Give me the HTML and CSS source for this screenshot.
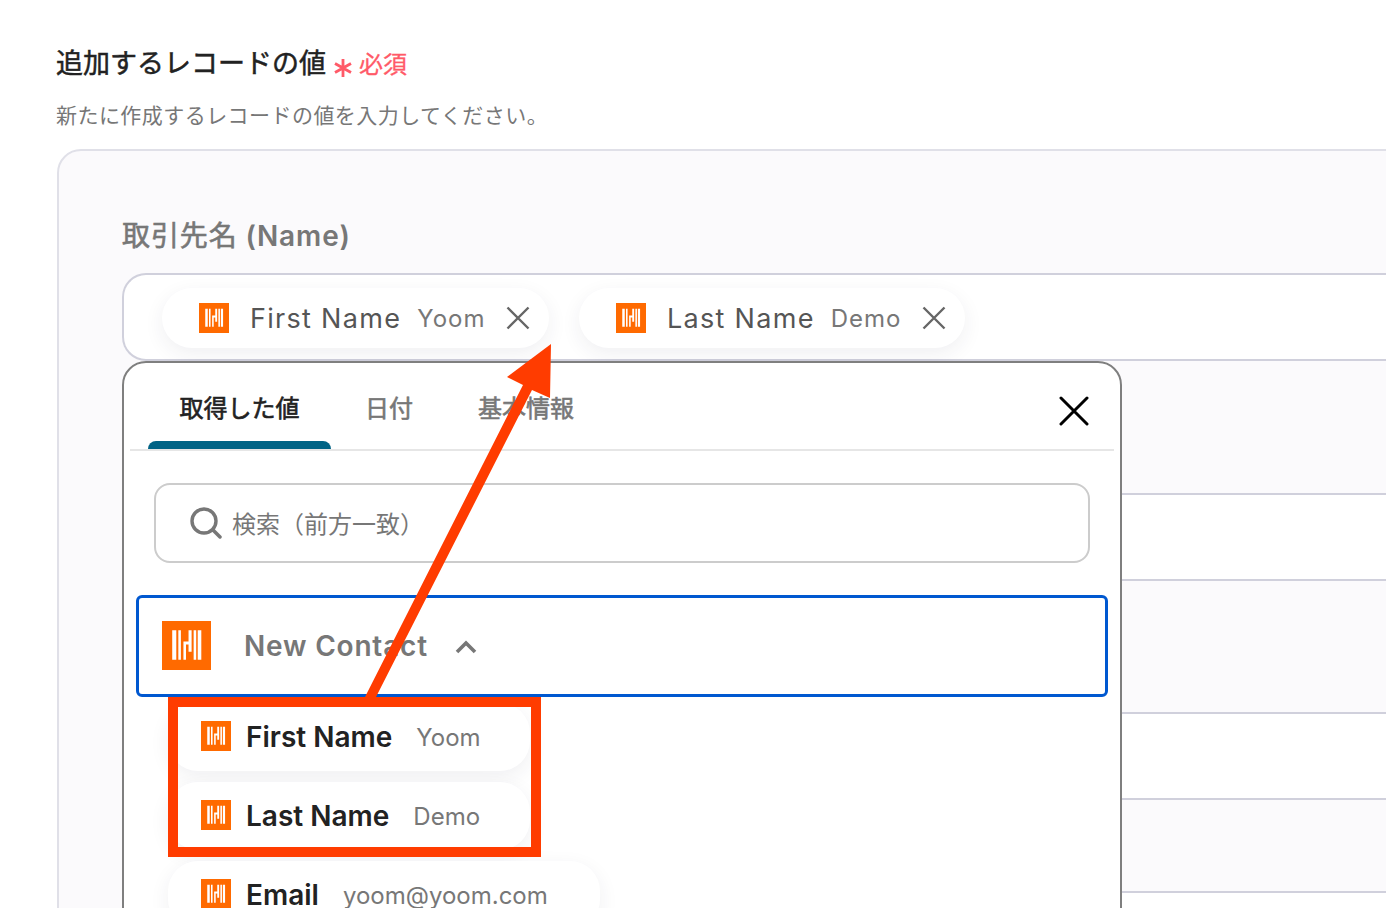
FILE: index.html
```html
<!DOCTYPE html>
<html lang="ja">
<head>
<meta charset="utf-8">
<title>追加するレコードの値</title>
<link rel="stylesheet" href="styles.css">
</head>
<body>
<svg class="defs" width="0" height="0" aria-hidden="true">
  <symbol id="logo" viewBox="0 0 48 48">
    <rect width="48" height="48" fill="#ff6a00"/>
    <path fill="#fff" d="M10 9h4v29h-4zM16 9h2.500v29H16zM21 20h5V9h3v21h-3v-7h-2.500v15H21zM31 9h2.500v29H31zM35 9h3.500v29H35z"/>
  </symbol>
</svg>
<main class="page">
  <h1 class="title">追加するレコードの値<span class="req"><svg class="star" viewBox="0 0 20 20"><path d="M10 1v18M2 5.500l16 9M18 5.500l-16 9" stroke="#ff5a68" stroke-width="2.800" fill="none"/></svg>必須</span></h1>
  <p class="sub">新たに作成するレコードの値を入力してください。</p>
  <section class="panel">
    <h2 class="label"><span class="label-ja">取引先名</span> (Name)</h2>
    <div class="field">
      <span class="chip">
        <svg class="ico"><use href="#logo"/></svg>
        <span class="chip-name">First Name</span>
        <span class="chip-val">Yoom</span>
        <svg class="chip-x" viewBox="0 0 24 24"><path d="M1.500 1.500l21 21M22.500 1.500l-21 21" stroke="#666" stroke-width="2.400" fill="none"/></svg>
      </span>
      <span class="chip">
        <svg class="ico"><use href="#logo"/></svg>
        <span class="chip-name">Last Name</span>
        <span class="chip-val">Demo</span>
        <svg class="chip-x" viewBox="0 0 24 24"><path d="M1.500 1.500l21 21M22.500 1.500l-21 21" stroke="#666" stroke-width="2.400" fill="none"/></svg>
      </span>
    </div>
    <div class="field gap-a"></div>
    <div class="field gap-b"></div>
    <div class="field gap-c"></div>
  </section>

  <div class="popup">
    <div class="tabs">
      <span class="tab active">取得した値</span>
      <span class="tab t2">日付</span>
      <span class="tab t3">基本情報</span>
      <svg class="close" viewBox="0 0 30 30"><path d="M2 2l26 26M28 2L2 28" stroke="#000" stroke-width="3" stroke-linecap="round" fill="none"/></svg>
    </div>
    <div class="search">
      <svg class="glass" viewBox="0 0 32 32"><circle cx="14" cy="14" r="12" stroke="#777" stroke-width="3.400" fill="none"/><path d="M23 23l7 7" stroke="#777" stroke-width="3.500" stroke-linecap="round"/></svg>
      <span class="search-text">検索（前方一致）</span>
    </div>
    <div class="group">
      <svg class="group-ico"><use href="#logo"/></svg>
      <span class="group-name">New Contact</span>
      <svg class="chev" viewBox="0 0 22 14"><path d="M2 12l9-9 9 9" stroke="#777" stroke-width="3.600" fill="none"/></svg>
    </div>
    <ul class="items">
      <li class="item w1"><svg class="ico"><use href="#logo"/></svg><b>First Name</b><span>Yoom</span></li>
      <li class="item w1"><svg class="ico"><use href="#logo"/></svg><b>Last Name</b><span>Demo</span></li>
      <li class="item w2"><svg class="ico"><use href="#logo"/></svg><b>Email</b><span>yoom@yoom.com</span></li>
    </ul>
  </div>

  <div class="mark"></div>
  <svg class="arrow" viewBox="0 0 1386 908" aria-hidden="true">
    <path fill="#ff3c00" d="M365 697L523 385L507 377L551 344L550 398L532 390L376 697z"/>
  </svg>
</main>
</body>
</html>
```
FILE: styles.css
```css
* { box-sizing: border-box; }
html, body {
  margin: 0;
  height: 908px;
  overflow: hidden;
  background: #fff;
}
body {
  font-family: Inter, "Noto Sans CJK JP", sans-serif;
  color: #222;
}
.defs { position: absolute; }
.page {
  position: relative;
  height: 908px;
  overflow: hidden;
  padding: 45px 0 0 56px;
}
.title {
  margin: 0;
  display: flex;
  align-items: center;
  height: 38px;
  font-size: 27px;
  font-weight: 400;
  line-height: 38px;
  color: #222;
  -webkit-text-stroke: 0.5px #222;
}
.req {
  display: flex;
  align-items: center;
  margin-left: 7px;
  padding-top: 2px;
  font-size: 24px;
  font-weight: 400;
  color: #ff5a68;
  -webkit-text-stroke: 0.3px #ff5a68;
}
.star {
  width: 20px;
  height: 20px;
  margin: 6px 6px 0 0;
}
.sub {
  margin: 17px 0 0;
  font-size: 21px;
  line-height: 32px;
  letter-spacing: 0.45px;
  color: #777;
}
.panel {
  width: 1400px;
  height: 800px;
  margin: 17px 0 0 1px;
  padding: 66px 0 0 63px;
  background: #fbfafc;
  border: 2px solid #e0e0e8;
  border-radius: 24px 0 0 0;
}
.label {
  margin: 0 0 18px;
  font-size: 28px;
  font-weight: 600;
  line-height: 38px;
  letter-spacing: 0.9px;
  color: #777;
}
.label-ja {
  font-weight: 400;
  -webkit-text-stroke: 0.6px #777;
}
.field {
  display: flex;
  align-items: center;
  gap: 30px;
  height: 88px;
  padding: 2px 0 0 38px;
  background: #fff;
  border: 2px solid #d0d0dc;
  border-right: 0;
  border-radius: 24px 0 0 24px;
}
.gap-a { margin-top: 132px; }
.gap-b { margin-top: 131px; }
.gap-c { margin-top: 91px; }
.chip {
  display: flex;
  align-items: center;
  width: 387px;
  height: 60px;
  padding: 1px 0 0 37px;
  background: #fff;
  border-radius: 30px;
  box-shadow: 0 6px 20px rgba(40, 40, 70, 0.07);
}
.chip + .chip { width: 386px; }
.ico {
  flex: none;
  width: 30px;
  height: 30px;
  margin-top: -2px;
}
.chip-name {
  margin-left: 21px;
  font-size: 27px;
  letter-spacing: 1.3px;
  color: #555;
}
.chip-val {
  margin-left: 16px;
  font-size: 24px;
  letter-spacing: 1px;
  color: #777;
}
.chip-x {
  width: 24px;
  height: 24px;
  margin: -2px 0 0 21px;
}
.popup {
  position: absolute;
  left: 122px;
  top: 361px;
  width: 1000px;
  height: 560px;
  background: #fff;
  border: 2px solid #7f7f7f;
  border-radius: 24px 24px 0 0;
}
.tabs {
  position: relative;
  display: flex;
  align-items: center;
  height: 88px;
  margin: 0 6px;
  border-bottom: 2px solid #e6e6e6;
  font-size: 24px;
  font-weight: 400;
  color: #777;
  -webkit-text-stroke: 0.6px #777;
}
.active {
  position: relative;
  width: 183px;
  margin-left: 18px;
  text-align: center;
  color: #222;
  -webkit-text-stroke: 0.6px #222;
}
.active::after {
  content: "";
  position: absolute;
  left: 0;
  right: 0;
  bottom: -25px;
  height: 8px;
  background: #006385;
  border-radius: 8px 8px 0 0;
}
.t2 { margin-left: 34px; }
.t3 { margin-left: 65px; }
.close {
  width: 30px;
  height: 30px;
  margin-left: auto;
  margin-right: 25px;
  margin-top: 10px;
}
.search {
  display: flex;
  align-items: center;
  width: 936px;
  height: 80px;
  margin: 32px 0 0 30px;
  padding-left: 34px;
  border: 2px solid #ccc;
  border-radius: 16px;
  font-size: 24px;
  color: #777;
}
.search-text { margin-top: -2px; }
.glass {
  width: 32px;
  height: 32px;
  margin-right: 10px;
}
.group {
  display: flex;
  align-items: center;
  width: 972px;
  height: 102px;
  margin: 32px 0 0 12px;
  padding-left: 23px;
  border: 3px solid #0058d0;
  border-radius: 6px;
}
.group-ico {
  width: 49px;
  height: 49px;
  margin-top: -2px;
}
.group-name {
  margin-left: 33px;
  font-size: 28px;
  font-weight: 600;
  letter-spacing: 0.8px;
  color: #777;
}
.chev {
  width: 22px;
  height: 14px;
  margin: 2px 0 0 27px;
}
.items {
  list-style: none;
  display: flex;
  flex-direction: column;
  gap: 11px;
  margin: 6px 0 0 44px;
  padding: 0;
}
.item {
  display: flex;
  align-items: center;
  height: 68px;
  padding-left: 33px;
  background: #fff;
  border-radius: 30px;
  box-shadow: 0 6px 20px rgba(40, 40, 70, 0.07);
}
.w1 { width: 362px; }
.w2 { width: 432px; }
.item b {
  margin-left: 15px;
  font-size: 28px;
  font-weight: 600;
  color: #222;
}
.item span {
  margin-left: 24px;
  font-size: 24px;
  color: #777;
}
.mark {
  position: absolute;
  left: 168px;
  top: 697px;
  width: 373px;
  height: 160px;
  border: 10px solid #ff3c00;
}
.arrow {
  position: absolute;
  left: 0;
  top: 0;
  width: 1386px;
  height: 908px;
}
```
